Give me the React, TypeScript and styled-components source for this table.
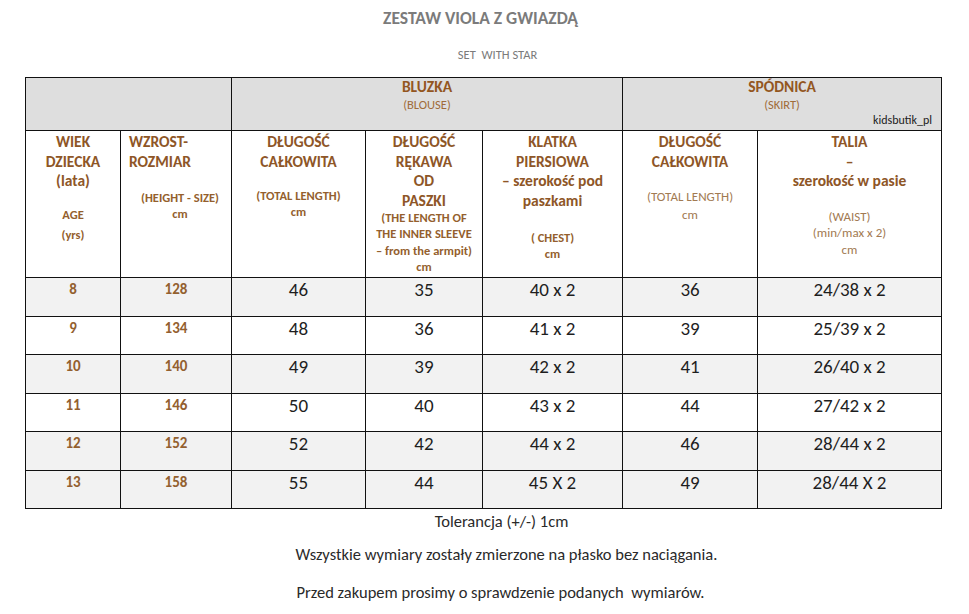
import React from "react";
import styled, { createGlobalStyle } from "styled-components";

const Global = createGlobalStyle`
  html, body { margin: 0; padding: 0; background: #fff; }
  body { font-family: Carlito, Calibri, Lato, "Open Sans", sans-serif; }
`;

const Page = styled.div`
  width: 969px;
  height: 614px;
  display: flex;
  flex-direction: column;
  align-items: center;
  overflow: hidden;
`;

const Title = styled.h1`
  margin: 7px 8px 0 0;
  height: 22px;
  font-size: 17.5px;
  line-height: 22px;
  font-weight: 700;
  color: #7b7b7b;
`;

const Subtitle = styled.div`
  margin: 18px 0 0 26px;
  height: 16px;
  font-size: 12.5px;
  line-height: 16px;
  color: #7b7b7b;
  white-space: pre;
`;

const Table = styled.table`
  align-self: flex-start;
  margin: 14px 0 0 25px;
  border-collapse: collapse;
  table-layout: fixed;
  width: 916px;
`;

const Col = styled.col<{ $w: number }>`
  width: ${(p) => p.$w}px;
`;

const Tr = styled.tr<{ $h: number; $shade?: boolean }>`
  height: ${(p) => p.$h}px;
  background: ${(p) => (p.$shade ? "#f2f2f2" : "#fff")};
`;

const HeadCell = styled.th`
  background: #dedede;
  border: 1px solid #111;
  padding: 0;
  vertical-align: top;
  text-align: center;
  font-weight: 400;
  position: relative;
`;

const GroupName = styled.div`
  font-size: 15.5px;
  line-height: 18px;
  font-weight: 700;
  color: #93561f;
`;

const GroupSub = styled.div`
  font-size: 12.5px;
  line-height: 17px;
  color: #a06c3a;
`;

const Brand = styled.div`
  position: absolute;
  right: 9px;
  bottom: 3px;
  font-size: 12px;
  line-height: 14px;
  color: #222;
`;

const SubCell = styled.th<{ $align?: "left" | "center" }>`
  border: 1px solid #111;
  padding: ${(p) => (p.$align === "left" ? "1px 0 0 8px" : "1px 0 0")};
  vertical-align: top;
  text-align: ${(p) => p.$align ?? "center"};
  font-weight: 400;
  background: #fff;
`;

const Big = styled.div`
  font-size: 15.5px;
  line-height: 19.5px;
  font-weight: 700;
  color: #8e5627;
  white-space: nowrap;
`;

const Small = styled.div<{ $bold?: boolean; $light?: boolean; $lh?: number }>`
  font-size: ${(p) => (p.$bold ? 12.5 : 13)}px;
  line-height: ${(p) => p.$lh ?? 16.3}px;
  font-weight: ${(p) => (p.$bold ? 700 : 400)};
  color: ${(p) => (p.$light ? "#a27a52" : "#945f2e")};
  text-align: center;
  white-space: nowrap;
`;

const Gap = styled.div<{ $h: number }>`
  height: ${(p) => p.$h}px;
`;

const KeyCell = styled.td`
  border: 1px solid #111;
  padding: 2px 0 0;
  vertical-align: top;
  text-align: center;
  font-size: 15px;
  line-height: 18px;
  font-weight: 700;
  color: #93602f;
`;

const ValCell = styled.td`
  border: 1px solid #111;
  padding: 1px 0 0;
  vertical-align: top;
  text-align: center;
  font-size: 19px;
  line-height: 22px;
  color: #1e1e1e;
`;

const Note = styled.p<{ $mt: number; $shift: number }>`
  margin: ${(p) => p.$mt}px 0 0 ${(p) => p.$shift * 2}px;
  font-size: 16.5px;
  line-height: 20px;
  color: #2a2a2a;
  white-space: pre;
`;

const rows: { shade: boolean; v: string[] }[] = [
  { shade: true, v: ["8", "128", "46", "35", "40 x 2", "36", "24/38 x 2"] },
  { shade: false, v: ["9", "134", "48", "36", "41 x 2", "39", "25/39 x 2"] },
  { shade: true, v: ["10", "140", "49", "39", "42 x 2", "41", "26/40 x 2"] },
  { shade: false, v: ["11", "146", "50", "40", "43 x 2", "44", "27/42 x 2"] },
  { shade: true, v: ["12", "152", "52", "42", "44 x 2", "46", "28/44 x 2"] },
  { shade: true, v: ["13", "158", "55", "44", "45 X 2", "49", "28/44 X 2"] },
];

export default function App() {
  return (
    <Page>
      <Global />
      <Title>ZESTAW VIOLA Z GWIAZDĄ</Title>
      <Subtitle>SET  WITH STAR</Subtitle>
      <Table>
        <colgroup>
          <Col $w={95} />
          <Col $w={111} />
          <Col $w={134} />
          <Col $w={117} />
          <Col $w={140} />
          <Col $w={135} />
          <Col $w={184} />
        </colgroup>
        <thead>
          <Tr $h={53}>
            <HeadCell colSpan={2} />
            <HeadCell colSpan={3}>
              <GroupName>BLUZKA</GroupName>
              <GroupSub>(BLOUSE)</GroupSub>
            </HeadCell>
            <HeadCell colSpan={2}>
              <GroupName>SPÓDNICA</GroupName>
              <GroupSub>(SKIRT)</GroupSub>
              <Brand>kidsbutik_pl</Brand>
            </HeadCell>
          </Tr>
          <Tr $h={147}>
            <SubCell>
              <Big>WIEK</Big>
              <Big>DZIECKA</Big>
              <Big>(lata)</Big>
              <Gap $h={14} />
              <Small $bold $lh={20}>AGE</Small>
              <Small $bold $lh={20}>(yrs)</Small>
            </SubCell>
            <SubCell $align="left">
              <Big>WZROST-</Big>
              <Big>ROZMIAR</Big>
              <Gap $h={19} />
              <Small $bold>(HEIGHT - SIZE)</Small>
              <Small $bold>cm</Small>
            </SubCell>
            <SubCell>
              <Big>DŁUGOŚĆ</Big>
              <Big>CAŁKOWITA</Big>
              <Gap $h={17} />
              <Small $bold>(TOTAL LENGTH)</Small>
              <Small $bold>cm</Small>
            </SubCell>
            <SubCell>
              <Big>DŁUGOŚĆ</Big>
              <Big>RĘKAWA</Big>
              <Big>OD</Big>
              <Big>PASZKI</Big>
              <Small $bold>(THE LENGTH OF</Small>
              <Small $bold>THE INNER SLEEVE</Small>
              <Small $bold>– from the armpit)</Small>
              <Small $bold>cm</Small>
            </SubCell>
            <SubCell>
              <Big>KLATKA</Big>
              <Big>PIERSIOWA</Big>
              <Big>– szerokość pod</Big>
              <Big>paszkami</Big>
              <Gap $h={20} />
              <Small $bold>( CHEST)</Small>
              <Small $bold>cm</Small>
            </SubCell>
            <SubCell>
              <Big>DŁUGOŚĆ</Big>
              <Big>CAŁKOWITA</Big>
              <Gap $h={17} />
              <Small $light $lh={17.5}>(TOTAL LENGTH)</Small>
              <Small $light $lh={17.5}>cm</Small>
            </SubCell>
            <SubCell>
              <Big>TALIA</Big>
              <Big>–</Big>
              <Big>szerokość w pasie</Big>
              <Gap $h={18} />
              <Small $light $lh={16.5}>(WAIST)</Small>
              <Small $light $lh={16.5}>(min/max x 2)</Small>
              <Small $light $lh={16.5}>cm</Small>
            </SubCell>
          </Tr>
        </thead>
        <tbody>
          {rows.map((r) => (
            <Tr key={r.v[0]} $h={38.5} $shade={r.shade}>
              <KeyCell>{r.v[0]}</KeyCell>
              <KeyCell>{r.v[1]}</KeyCell>
              {r.v.slice(2).map((x, i) => (
                <ValCell key={i}>{x}</ValCell>
              ))}
            </Tr>
          ))}
        </tbody>
      </Table>
      <Note $mt={2} $shift={17}>Tolerancja (+/-) 1cm</Note>
      <Note $mt={13} $shift={22}>Wszystkie wymiary zostały zmierzone na płasko bez naciągania.</Note>
      <Note $mt={18} $shift={16}>Przed zakupem prosimy o sprawdzenie podanych  wymiarów.</Note>
    </Page>
  );
}
